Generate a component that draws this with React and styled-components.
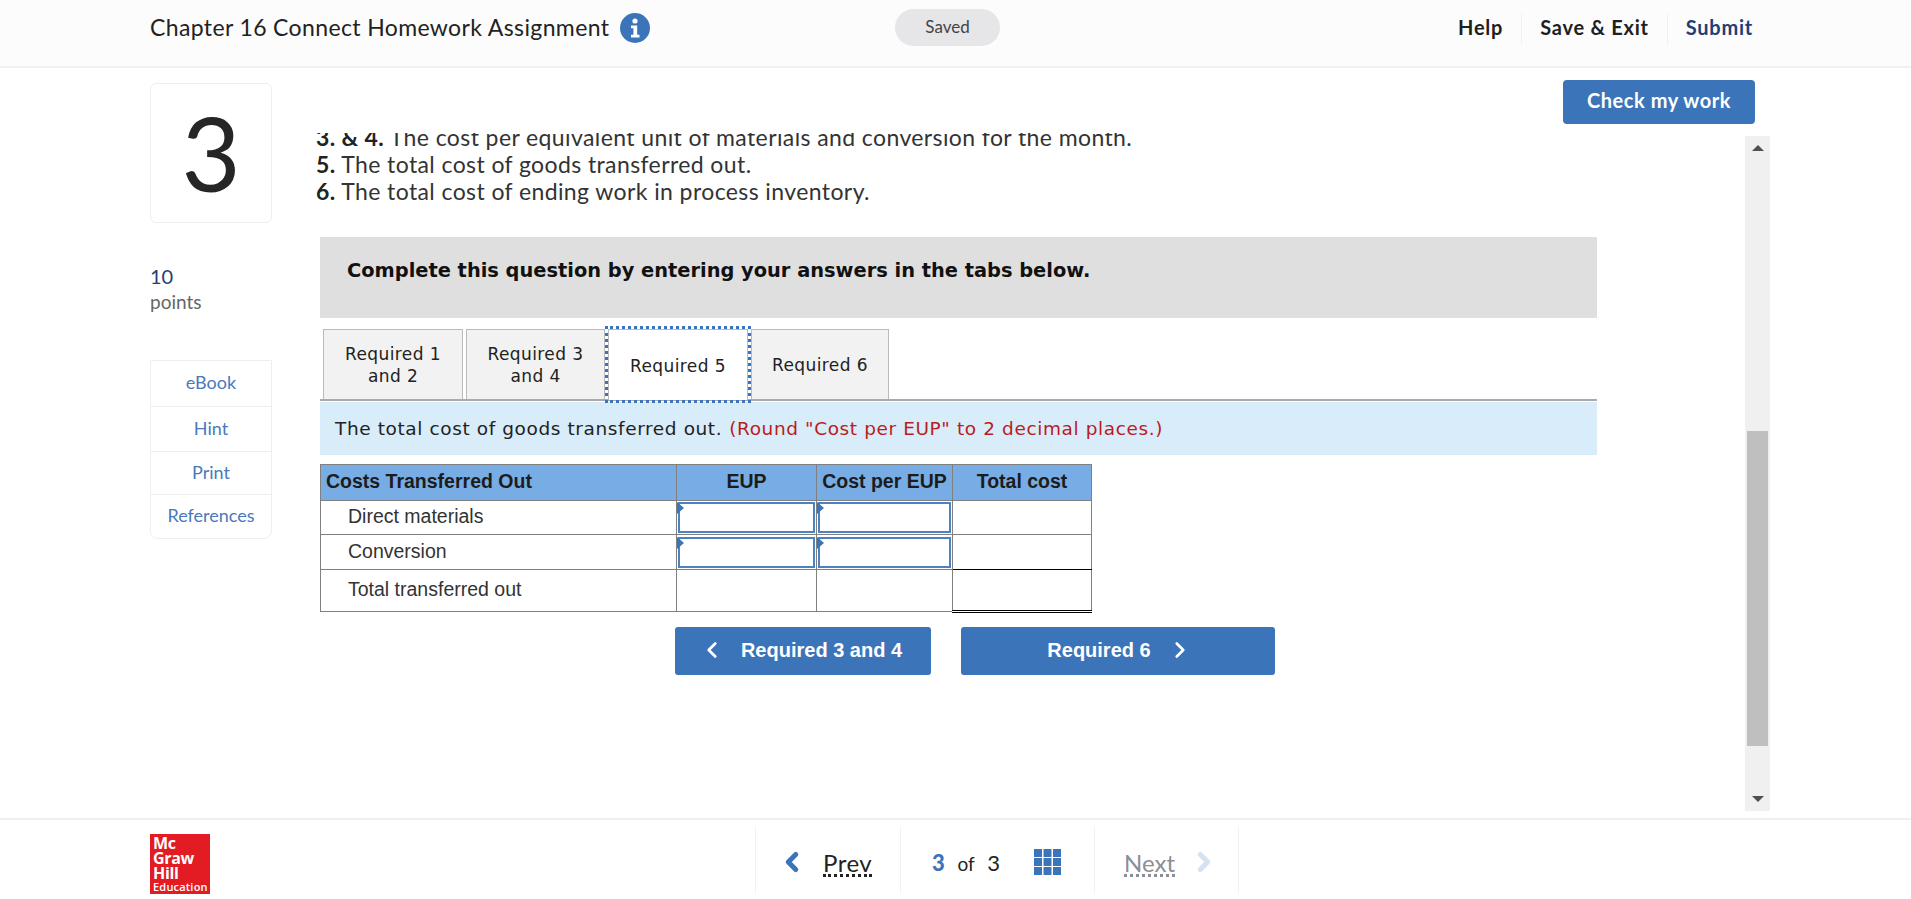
import React from 'react';
import styled, { createGlobalStyle } from 'styled-components';
import { ChevronLeft, ChevronRight } from 'lucide-react';

const GlobalStyle = createGlobalStyle`
	html, body {
		margin: 0;
		padding: 0;
		background: #fff;
		overflow: hidden;
	}
	* {
		box-sizing: border-box;
	}
`;

const Page = styled.div`
	width: 1911px;
	height: 899px;
	display: flex;
	flex-direction: column;
	font-family: Lato, "Open Sans", sans-serif;
	color: #222;
`;

const Header = styled.header`
	height: 68px;
	flex: none;
	display: flex;
	align-items: flex-start;
	padding: 9px 158px 0 150px;
	background: #fcfcfc;
	border-bottom: 2px solid #f0f0f0;
`;

const TitleGroup = styled.div`
	width: 745px;
	height: 37px;
	display: flex;
	align-items: center;
	gap: 11px;
`;

const Title = styled.span`
	font-size: 23px;
	letter-spacing: 0.37px;
	padding-bottom: 1px;
	color: #222;
`;

const SavedPill = styled.div`
	width: 105px;
	height: 37px;
	padding-bottom: 3px;
	border-radius: 19px;
	background: #e6e5e8;
	display: flex;
	align-items: center;
	justify-content: center;
	font-size: 17px;
	color: #444;
`;

const HeaderLinks = styled.nav`
	margin-left: auto;
	margin-top: 5px;
	display: flex;
`;

const HeaderLink = styled.a`
	height: 30px;
	display: flex;
	align-items: center;
	padding: 0 18px 4px;
	font-size: 20px;
	letter-spacing: 0.75px;
	font-weight: 700;
	color: ${p => p.$accent ? '#1d3f78' : '#1f1f1f'};
	border-left: ${p => p.$first ? 'none' : '1px solid #f0f0f0'};
	&:last-child {
		padding-right: 0;
	}
`;

const Main = styled.main`
	flex: 1;
	min-height: 0;
	display: flex;
	padding: 15px 0 0 150px;
`;

const Sidebar = styled.aside`
	width: 122px;
	flex: none;
	margin-right: 44px;
`;

const QuestionNumber = styled.div`
	height: 140px;
	border: 1px solid #eee;
	border-radius: 6px;
	display: flex;
	align-items: center;
	justify-content: center;
	font-size: 102px;
	line-height: 1;
	color: #262626;
`;

const Points = styled.div`
	margin-top: 40px;
	font-size: 20px;
	line-height: 26px;
	color: #1f3f77;
	span {
		display: block;
		font-size: 19px;
		color: #666;
	}
`;

const SideNav = styled.div`
	margin-top: 45px;
	border: 1px solid #eee;
	border-radius: 0 0 8px 8px;
`;

const SideNavItem = styled.a`
	height: ${p => p.$h}px;
	padding-bottom: 3px;
	display: flex;
	align-items: center;
	justify-content: center;
	font-size: 18px;
	color: #4a79bb;
	& + & {
		border-top: 1px solid #eee;
	}
`;

const Workspace = styled.div`
	width: 1454px;
	flex: none;
	display: flex;
	flex-direction: column;
`;

const Toolbar = styled.div`
	height: 44px;
	margin-top: -3px;
	margin-bottom: 9px;
	padding-right: 15px;
	display: flex;
	justify-content: flex-end;
`;

const CheckButton = styled.button`
	width: 192px;
	height: 44px;
	padding: 0 0 4px;
	border: none;
	border-radius: 4px;
	background: #3b74b8;
	color: #fff;
	font-family: Lato, sans-serif;
	font-size: 20px;
	letter-spacing: 0.55px;
	font-weight: 700;
`;

const ScrollPanel = styled.div`
	height: 678px;
	display: flex;
`;

const Content = styled.div`
	width: 1429px;
	flex: none;
	padding-left: 4px;
	overflow: hidden;
`;

const Prompt = styled.div`
	margin: -9px 0 32px -4px;
	font-size: 23px;
	letter-spacing: 0.4px;
	line-height: 27px;
	color: #333;
	b {
		color: #222;
	}
`;

const Banner = styled.div`
	width: 1277px;
	height: 81px;
	padding: 21px 27px;
	background: #dfdfdf;
	font-family: "DejaVu Sans", Verdana, sans-serif;
	font-size: 19.4px;
	line-height: 26px;
	font-weight: 700;
	color: #111;
`;

const TabList = styled.div`
	width: 1277px;
	height: 72px;
	margin-top: 11px;
	padding-left: 3px;
	display: flex;
	gap: 3px;
	border-bottom: 2px solid #aaa;
`;

const Tab = styled.div`
	position: relative;
	width: ${p => p.$w}px;
	height: 70px;
	padding-top: 1px;
	display: flex;
	align-items: center;
	justify-content: center;
	text-align: center;
	font-family: "DejaVu Sans", Verdana, sans-serif;
	font-size: 17px;
	letter-spacing: 0.4px;
	line-height: 22px;
	color: #222;
	background: ${p => p.$active ? '#fff' : '#f2f2f2'};
	border: 1px solid #bbb;
	border-bottom: none;
	${p => p.$active && `
		outline: 3px dotted #3b74b8;
		outline-offset: 0;
		height: 71px;
		z-index: 1;
	`}
`;

const Instruction = styled.div`
	width: 1277px;
	height: 53px;
	margin-top: 1px;
	padding-left: 15px;
	display: flex;
	align-items: center;
	background: #d9ecfa;
	font-family: "DejaVu Sans", Verdana, sans-serif;
	font-size: 18.5px;
	letter-spacing: 0.6px;
	color: #222;
	em {
		font-style: normal;
		color: #b91c1c;
		margin-left: 7px;
	}
`;

const Table = styled.table`
	width: 771px;
	margin-top: 9px;
	border-collapse: collapse;
	table-layout: fixed;
	font-family: "Liberation Sans", Arial, sans-serif;
	font-size: 19.5px;
	color: #333;
`;

const HeadCell = styled.th`
	height: 36px;
	padding: 0 0 2px ${p => p.$left ? '5px' : '0'};
	background: #78ace4;
	border: 1px solid #808080;
	font-weight: 700;
	color: #1c1c1c;
	text-align: ${p => p.$left ? 'left' : 'center'};
	white-space: nowrap;
`;

const Row = styled.tr`
	height: ${p => p.$h}px;
`;

const LabelCell = styled.td`
	padding: 0 0 2px 27px;
	border: 1px solid #808080;
`;

const AnswerCell = styled.td`
	padding: 0;
	border: 1px solid #808080;
	${p => p.$single && 'border-bottom: 1px solid #000;'}
	${p => p.$double && 'border-top: 1px solid #000; border-bottom: 3px double #000;'}
`;

const InputWrap = styled.div`
	position: relative;
	height: 31px;
	margin: 0 1px;
	&::before {
		content: '';
		position: absolute;
		left: -1px;
		top: 0;
		border-left: 7px solid #3b74b8;
		border-top: 6px solid transparent;
		border-bottom: 6px solid transparent;
	}
`;

const AnswerInput = styled.input`
	width: 100%;
	height: 100%;
	display: block;
	padding: 0;
	background: #fff;
	border: 2px solid #4c82c2;
	border-radius: 0;
	outline: none;
`;

const PagerRow = styled.div`
	margin-top: 14px;
	padding-left: 355px;
	display: flex;
	gap: 30px;
`;

const PagerButton = styled.button`
	width: ${p => p.$w}px;
	height: 48px;
	padding: 0 ${p => p.$back ? '5px' : '0'} 2px ${p => p.$back ? '0' : '4px'};
	border: none;
	border-radius: 3px;
	background: #3b74b8;
	color: #fff;
	font-family: "Liberation Sans", Arial, sans-serif;
	font-size: 20px;
	font-weight: 700;
	display: flex;
	align-items: center;
	justify-content: center;
	gap: 16px;
`;

const ScrollBar = styled.div`
	width: 25px;
	height: 675px;
	margin-top: 3px;
	flex: none;
	padding: 0 2px;
	background: #f0f0f0;
	display: flex;
	flex-direction: column;
	align-items: center;
`;

const ScrollArrow = styled.div`
	height: 24px;
	display: flex;
	align-items: center;
	justify-content: center;
	&::before {
		content: '';
		border-left: 6px solid transparent;
		border-right: 6px solid transparent;
		${p => p.$down ? 'border-top: 6px solid #505050;' : 'border-bottom: 6px solid #505050;'}
	}
`;

const ScrollSpacer = styled.div`
	flex: ${p => p.$flex};
`;

const ScrollThumb = styled.div`
	width: 21px;
	height: 315px;
	flex: none;
	background: #bfbfbf;
`;

const Footer = styled.footer`
	height: 81px;
	flex: none;
	padding: 7px 0 0 150px;
	display: flex;
	border-top: 2px solid #f0f0f0;
`;

const Logo = styled.div`
	width: 60px;
	height: 60px;
	margin-top: 7px;
	padding: 2px 3px;
	flex: none;
	background: #e31b23;
	color: #fff;
	font-family: "Open Sans", sans-serif;
	font-weight: 700;
	font-size: 16px;
	letter-spacing: -0.3px;
	line-height: 15px;
	span {
		display: block;
		font-size: 11px;
		line-height: 12px;
		font-weight: 600;
		letter-spacing: 0.2px;
	}
`;

const PagerNav = styled.nav`
	margin-left: 545px;
	height: 66px;
	display: flex;
`;

const NavCell = styled.div`
	width: ${p => p.$w}px;
	display: flex;
	align-items: center;
	padding-top: 4px;
	padding-left: ${p => p.$pad}px;
	gap: ${p => p.$gap}px;
	border-left: 1px solid #f0f0f0;
	&:last-child {
		border-right: 1px solid #f0f0f0;
	}
`;

const NavText = styled.a`
	padding-top: 4px;
	font-size: 24px;
	letter-spacing: ${p => p.$muted ? '0' : '0.5px'};
	line-height: 22px;
	color: ${p => p.$muted ? '#8a8f96' : '#222'};
	border-bottom: 3px dotted ${p => p.$muted ? '#8a8f96' : '#222'};
`;

const Counter = styled.div`
	width: 68px;
	display: flex;
	align-items: baseline;
	justify-content: space-between;
	font-size: 22px;
	b {
		color: #3b74b8;
		font-weight: 900;
	}
	small {
		font-size: 19px;
	}
`;

const InfoIcon = () => (
	<svg width="30" height="30" viewBox="0 0 30 30">
		<circle cx="15" cy="15" r="15" fill="#3b74b8" />
		<circle cx="15" cy="8" r="2.6" fill="#fff" />
		<path d="M11 12.5h6.2v9.3H19.5v2.7h-8.5v-2.7h2.4v-6.6H11z" fill="#fff" />
	</svg>
);

const GridIcon = () => (
	<svg width="27" height="26" viewBox="0 0 27 26">
		{[0, 9.5, 19].map(x => [0, 9, 18].map(y => (
			<rect key={x + '-' + y} x={x} y={y} width="8" height="8" fill="#3b74b8" />
		)))}
	</svg>
);

const sideLinks = [['eBook', 45], ['Hint', 45], ['Print', 43], ['References', 44]];

const App = () => {
	return (
		<Page>
			<GlobalStyle />
			<Header>
				<TitleGroup>
					<Title>Chapter 16 Connect Homework Assignment</Title>
					<InfoIcon />
				</TitleGroup>
				<SavedPill>Saved</SavedPill>
				<HeaderLinks>
					<HeaderLink $first>Help</HeaderLink>
					<HeaderLink>Save &amp; Exit</HeaderLink>
					<HeaderLink $accent>Submit</HeaderLink>
				</HeaderLinks>
			</Header>
			<Main>
				<Sidebar>
					<QuestionNumber>3</QuestionNumber>
					<Points>10<span>points</span></Points>
					<SideNav>
						{sideLinks.map(([label, h]) => (
							<SideNavItem key={label} $h={h}>{label}</SideNavItem>
						))}
					</SideNav>
				</Sidebar>
				<Workspace>
					<Toolbar>
						<CheckButton>Check my work</CheckButton>
					</Toolbar>
					<ScrollPanel>
						<Content>
							<Prompt>
								<div><b>3. &amp; 4.</b> The cost per equivalent unit of materials and conversion for the month.</div>
								<div><b>5.</b> The total cost of goods transferred out.</div>
								<div><b>6.</b> The total cost of ending work in process inventory.</div>
							</Prompt>
							<Banner>Complete this question by entering your answers in the tabs below.</Banner>
							<TabList>
								<Tab $w={140}>Required 1<br />and 2</Tab>
								<Tab $w={139}>Required 3<br />and 4</Tab>
								<Tab $w={140} $active>Required 5</Tab>
								<Tab $w={138}>Required 6</Tab>
							</TabList>
							<Instruction>
								The total cost of goods transferred out.
								<em>(Round "Cost per EUP" to 2 decimal places.)</em>
							</Instruction>
							<Table>
								<colgroup>
									<col style={{ width: 356 }} />
									<col style={{ width: 140 }} />
									<col style={{ width: 136 }} />
									<col style={{ width: 139 }} />
								</colgroup>
								<thead>
									<tr>
										<HeadCell $left>Costs Transferred Out</HeadCell>
										<HeadCell>EUP</HeadCell>
										<HeadCell>Cost per EUP</HeadCell>
										<HeadCell>Total cost</HeadCell>
									</tr>
								</thead>
								<tbody>
									<Row $h={34}>
										<LabelCell>Direct materials</LabelCell>
										<AnswerCell><InputWrap><AnswerInput /></InputWrap></AnswerCell>
										<AnswerCell><InputWrap><AnswerInput /></InputWrap></AnswerCell>
										<AnswerCell />
									</Row>
									<Row $h={35}>
										<LabelCell>Conversion</LabelCell>
										<AnswerCell><InputWrap><AnswerInput /></InputWrap></AnswerCell>
										<AnswerCell><InputWrap><AnswerInput /></InputWrap></AnswerCell>
										<AnswerCell $single />
									</Row>
									<Row $h={42}>
										<LabelCell>Total transferred out</LabelCell>
										<AnswerCell />
										<AnswerCell />
										<AnswerCell $double />
									</Row>
								</tbody>
							</Table>
							<PagerRow>
								<PagerButton $w={256} $back>
									<ChevronLeft size={26} strokeWidth={2.5} />
									Required 3 and 4
								</PagerButton>
								<PagerButton $w={314}>
									Required 6
									<ChevronRight size={26} strokeWidth={2.5} />
								</PagerButton>
							</PagerRow>
						</Content>
						<ScrollBar>
							<ScrollArrow />
							<ScrollSpacer $flex={270} />
							<ScrollThumb />
							<ScrollSpacer $flex={41} />
							<ScrollArrow $down />
						</ScrollBar>
					</ScrollPanel>
				</Workspace>
			</Main>
			<Footer>
				<Logo>
					Mc<br />Graw<br />Hill
					<span>Education</span>
				</Logo>
				<PagerNav>
					<NavCell $w={145} $pad={21} $gap={16}>
						<ChevronLeft size={30} strokeWidth={4} color="#3b74b8" />
						<NavText>Prev</NavText>
					</NavCell>
					<NavCell $w={194} $pad={31} $gap={34}>
						<Counter><b>3</b><small>of</small><span>3</span></Counter>
						<GridIcon />
					</NavCell>
					<NavCell $w={145} $pad={29} $gap={14}>
						<NavText $muted>Next</NavText>
						<ChevronRight size={30} strokeWidth={4} color="#d6e2f2" />
					</NavCell>
				</PagerNav>
			</Footer>
		</Page>
	);
};

export default App;
